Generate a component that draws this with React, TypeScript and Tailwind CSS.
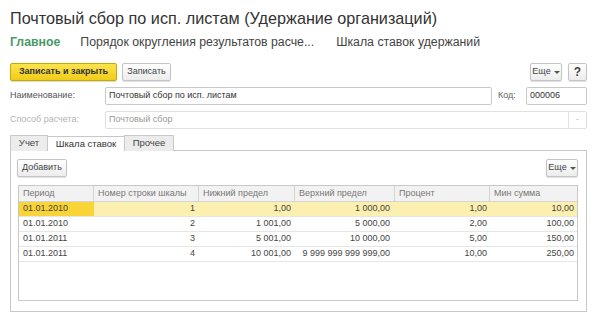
import { type FC } from 'react'

// Строки шкалы ставок
interface Row {
  period: string
  num: string
  low: string
  high: string
  pct: string
  min: string
}

const rows: Row[] = [
  { period: '01.01.2010', num: '1', low: '1,00', high: '1 000,00', pct: '1,00', min: '10,00' },
  { period: '01.01.2010', num: '2', low: '1 001,00', high: '5 000,00', pct: '2,00', min: '100,00' },
  { period: '01.01.2011', num: '3', low: '5 001,00', high: '10 000,00', pct: '5,00', min: '150,00' },
  { period: '01.01.2011', num: '4', low: '10 001,00', high: '9 999 999 999 999,00', pct: '10,00', min: '250,00' },
]

const cols = [
  { title: 'Период', w: 'w-[75px]' },
  { title: 'Номер строки шкалы', w: 'w-[105px]' },
  { title: 'Нижний предел', w: 'w-[96px]' },
  { title: 'Верхний предел', w: 'w-[100px]' },
  { title: 'Процент', w: 'w-[95px]' },
  { title: 'Мин сумма', w: 'flex-1' },
]

const Arrow: FC = () => (
  <span className="ml-[3px] inline-block h-0 w-0 border-x-[3px] border-t-[3px] border-x-transparent border-t-[#555]" />
)

const Btn: FC<{ children: React.ReactNode; className?: string }> = ({ children, className = '' }) => (
  <div
    className={`flex h-[18px] items-center rounded-[2px] border border-[#c4c4c4] bg-gradient-to-b from-white to-[#ececec] px-[4px] text-[9px] text-[#444] shadow-[0_1px_1px_rgba(0,0,0,0.12)] ${className}`}
  >
    {children}
  </div>
)

export default function App() {
  return (
    <div className="h-[321px] w-[600px] overflow-hidden bg-white pl-[10px] font-['Liberation_Sans',Arial,sans-serif] text-[#333]">
      <div className="flex w-[577px] flex-col">
        {/* Заголовок */}
        <div className="mt-[7px] h-[22px] text-[16.2px] leading-[22px] text-[#333]">
          Почтовый сбор по исп. листам (Удержание организаций)
        </div>

        {/* Навигация */}
        <div className="mt-[5px] flex h-[16px] items-center text-[12.3px] leading-[16px] text-[#444]">
          <span className="font-bold text-[#4a9a69]">Главное</span>
          <span className="ml-[20px]">Порядок округления результатов расче...</span>
          <span className="ml-[22px]">Шкала ставок удержаний</span>
        </div>

        {/* Командная панель */}
        <div className="mt-[13px] flex items-center">
          <div className="flex h-[18px] w-[107px] items-center justify-center rounded-[2px] border border-[#c9a800] bg-gradient-to-b from-[#fbe44a] to-[#f1cc14] text-[9px] font-bold text-[#333] shadow-[0_1px_1px_rgba(0,0,0,0.15)]">
            Записать и закрыть
          </div>
          <Btn className="ml-[5px] w-[49px] justify-center">Записать</Btn>
          <div className="flex-1" />
          <Btn className="w-[32px] justify-center">
            Еще
            <Arrow />
          </Btn>
          <Btn className="ml-[6px] w-[19px] justify-center text-[12px] font-bold">?</Btn>
        </div>

        {/* Наименование / Код */}
        <div className="mt-[6px] flex h-[18px] items-center text-[9px]">
          <span className="w-[95px] text-[#555]">Наименование:</span>
          <div className="flex h-full w-[387px] items-center rounded-[2px] border border-[#c8c8c8] px-[3px] text-[#333]">
            Почтовый сбор по исп. листам
          </div>
          <span className="ml-[6px] w-[28px] text-[#666]">Код:</span>
          <div className="flex h-full flex-1 items-center rounded-[2px] border border-[#c8c8c8] px-[3px] text-[#333]">
            000006
          </div>
        </div>

        {/* Способ расчета */}
        <div className="mt-[6px] flex h-[18px] items-center text-[9px]">
          <span className="w-[95px] text-[#b4b4b4]">Способ расчета:</span>
          <div className="flex h-full flex-1 items-center rounded-[2px] border border-[#e0e0e0] text-[#9a9a9a]">
            <span className="flex-1 px-[3px]">Почтовый сбор</span>
            <span className="flex h-full w-[18px] items-center justify-center border-l border-[#e0e0e0] text-[#bbb]">
              -
            </span>
          </div>
        </div>

        {/* Вкладки */}
        <div className="mt-[6px] flex h-[16px] text-[9.5px]">
          <div className="flex w-[38px] items-center justify-center border border-b-0 border-[#c8c8c8] bg-[#ececec] text-[#444]">
            Учет
          </div>
          <div className="relative top-[1px] flex w-[76px] items-center justify-center border-t border-[#c8c8c8] bg-white text-[#333]">
            Шкала ставок
          </div>
          <div className="flex w-[50px] items-center justify-center border border-b-0 border-[#c8c8c8] bg-[#ececec] text-[#444]">
            Прочее
          </div>
          <div className="flex-1 border-b border-[#c8c8c8]" />
        </div>

        {/* Панель вкладки */}
        <div className="flex h-[161px] flex-col border border-t-0 border-[#c8c8c8] pl-[6px] pr-[8px] pt-[8px]">
          <div className="flex items-center">
            <Btn className="w-[50px] justify-center">Добавить</Btn>
            <div className="flex-1" />
            <Btn className="w-[32px] justify-center">
              Еще
              <Arrow />
            </Btn>
          </div>

          {/* Таблица */}
          <div className="mt-[8px] ml-[1px] flex h-[116px] flex-col border border-[#c8c8c8] text-[9px]">
            <div className="flex h-[16px] border-b border-[#d4d4d4] bg-[#f2f2f2] text-[#777]">
              {cols.map((c, i) => (
                <div
                  key={c.title}
                  className={`${c.w} flex items-center px-[4px] ${i < cols.length - 1 ? 'border-r border-[#d4d4d4]' : ''}`}
                >
                  {c.title}
                </div>
              ))}
            </div>
            {rows.map((r, i) => {
              const sel = i === 0
              const cell = sel ? 'bg-[#fcf0b0]' : ''
              return (
                <div key={i} className="flex h-[15px] border-b border-[#e6e6e6] text-[#444]">
                  <div className={`flex w-[75px] items-center px-[4px] ${sel ? 'bg-[#f8d437]' : ''}`}>
                    {r.period}
                  </div>
                  <div className={`flex w-[105px] items-center justify-end px-[4px] ${cell}`}>{r.num}</div>
                  <div className={`flex w-[96px] items-center justify-end px-[4px] ${cell}`}>{r.low}</div>
                  <div className={`flex w-[100px] items-center justify-end px-[5px] ${cell}`}>{r.high}</div>
                  <div className={`flex w-[95px] items-center justify-end px-[3px] ${cell}`}>{r.pct}</div>
                  <div className={`flex flex-1 items-center justify-end px-[3px] ${cell}`}>{r.min}</div>
                </div>
              )
            })}
          </div>
        </div>
      </div>
    </div>
  )
}
